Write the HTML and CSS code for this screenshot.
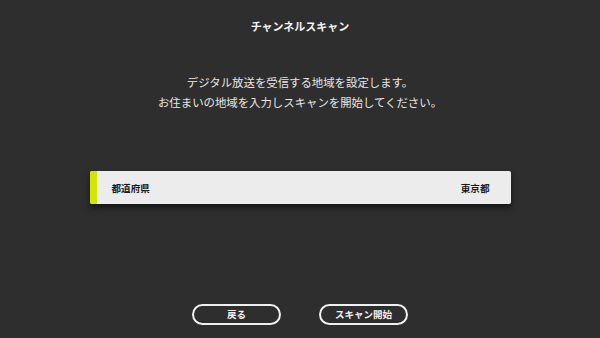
FILE: index.html
```html
<!DOCTYPE html>
<html lang="ja">
<head>
<meta charset="utf-8">
<link rel="stylesheet" href="styles.css">
</head>
<body>
<div class="screen">
  <h1 class="title">チャンネルスキャン</h1>
  <p class="desc">デジタル放送を受信する地域を設定します。<br>お住まいの地域を入力しスキャンを開始してください。</p>
  <div class="bar">
    <span class="accent"></span>
    <span class="label">都道府県</span>
    <span class="value">東京都</span>
  </div>
  <div class="actions">
    <button class="btn">戻る</button>
    <button class="btn">スキャン開始</button>
  </div>
</div>
</body>
</html>
```
FILE: styles.css
```css
html, body {
  margin: 0;
  padding: 0;
  background: #2e2e2e;
}
.screen {
  width: 600px;
  height: 338px;
  display: flex;
  flex-direction: column;
  align-items: center;
  font-family: "Noto Sans CJK JP", "Noto Sans", sans-serif;
  color: #f2f2f2;
  overflow: hidden;
}
.title {
  margin: 18px 0 0;
  font-size: 11px;
  line-height: 16px;
  font-weight: 700;
  color: #f4f4f4;
}
.desc {
  margin: 38px 0 0;
  font-size: 11.4px;
  line-height: 20px;
  text-align: center;
  color: #e6e6e6;
}
.bar {
  margin-top: 59px;
  width: 421px;
  height: 33px;
  display: flex;
  align-items: center;
  background: #ececec;
  border-radius: 2px;
  box-shadow: 0 4px 6px rgba(0, 0, 0, 0.55);
  color: #1a1a1a;
  font-size: 9.6px;
  font-weight: 700;
  overflow: hidden;
}
.accent {
  width: 7px;
  align-self: stretch;
  background: #d2e600;
}
.label {
  margin-left: 15px;
  flex: 1;
}
.value {
  margin-right: 21px;
}
.actions {
  margin-top: 100px;
  display: flex;
  gap: 38px;
}
.btn {
  width: 89px;
  height: 21px;
  padding: 0;
  border: 2px solid #f0f0f0;
  border-radius: 11px;
  background: transparent;
  color: #f0f0f0;
  font-family: "Noto Sans CJK JP", "Noto Sans", sans-serif;
  font-size: 9.5px;
  font-weight: 700;
  line-height: 15px;
}
```
